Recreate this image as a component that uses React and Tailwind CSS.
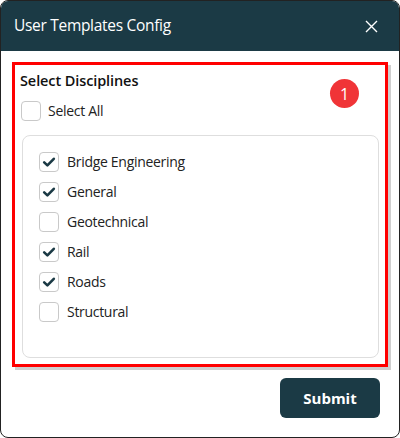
import { useState } from "react";

const disciplines = [
    { name: "Bridge Engineering", checked: true },
    { name: "General", checked: true },
    { name: "Geotechnical", checked: false },
    { name: "Rail", checked: true },
    { name: "Roads", checked: true },
    { name: "Structural", checked: false },
];

const CheckBox = ({ checked, onClick }) => (
    <button
        type="button"
        onClick={onClick}
        className="w-[20px] h-[20px] shrink-0 rounded-[4px] border border-[#c9c9c9] bg-white flex items-center justify-center"
    >
        {checked && (
            <svg width="14" height="14" viewBox="0 0 14 14" fill="none">
                <path d="M2.2 7.4 L5.4 10.4 L11.8 3.8" stroke="#1b3a45" strokeWidth="2.6" strokeLinecap="round" strokeLinejoin="round" />
            </svg>
        )}
    </button>
);

const App = () => {
    const [items, setItems] = useState(disciplines);
    const allChecked = items.every((i) => i.checked);

    const toggle = (index) => {
        setItems(items.map((i, idx) => (idx === index ? { ...i, checked: !i.checked } : i)));
    };

    return (
        <div className="w-[400px] h-[438px] bg-white" style={{ fontFamily: "'Open Sans', sans-serif" }}>
            <div className="w-full h-full rounded-[8px] border border-[#222] overflow-hidden flex flex-col">
                <div className="h-[50px] bg-[#1b3a45] flex items-center justify-between pl-[13px] pr-[21px] shrink-0">
                    <h1 className="text-white text-[15.5px] font-medium tracking-[-0.3px]">User Templates Config</h1>
                    <svg width="13" height="13" viewBox="0 0 13 13" fill="none">
                        <path d="M1 1 L12 12 M12 1 L1 12" stroke="white" strokeWidth="1.4" />
                    </svg>
                </div>
                <div className="pl-[11px] pr-[11px] pt-[11px]">
                    <div className="relative h-[305px] w-[376px] border-[3px] border-[#ff0000] shadow-[3px_3px_0_#cfcfcf] flex flex-col pl-[5px] pr-[6px] pb-[6px]">
                        <div className="absolute right-[26px] top-[14px] w-[29px] h-[29px] rounded-full bg-[#f03437] text-white text-[16px] flex items-center justify-center">1</div>
                        <h2 className="text-[14.5px] font-semibold text-[#111] mt-[6px] leading-[20px] tracking-[-0.1px]">Select Disciplines</h2>
                        <div className="flex items-center gap-[7px] mt-[10px] ml-[1px]">
                            <CheckBox checked={allChecked} onClick={() => setItems(items.map((i) => ({ ...i, checked: !allChecked })))} />
                            <span className="text-[14px] leading-[20px] text-[#222] tracking-[-0.3px]">Select All</span>
                        </div>
                        <div className="flex-1 mt-[14px] ml-[2px] rounded-[8px] border border-[#dedede] pl-[16px] pt-[16px] flex flex-col gap-[10px]">
                            {items.map((item, index) => (
                                <div key={index} className="flex items-center gap-[8px]">
                                    <CheckBox checked={item.checked} onClick={() => toggle(index)} />
                                    <span className="text-[14px] leading-[20px] text-[#222] tracking-[-0.3px]">{item.name}</span>
                                </div>
                            ))}
                        </div>
                    </div>
                </div>
                <div className="flex justify-end pr-[19px] mt-[11px]">
                    <button type="button" className="w-[100px] h-[40px] rounded-[6px] bg-[#1b3a45] text-white text-[15px] font-bold">Submit</button>
                </div>
            </div>
        </div>
    );
};

export default App;
